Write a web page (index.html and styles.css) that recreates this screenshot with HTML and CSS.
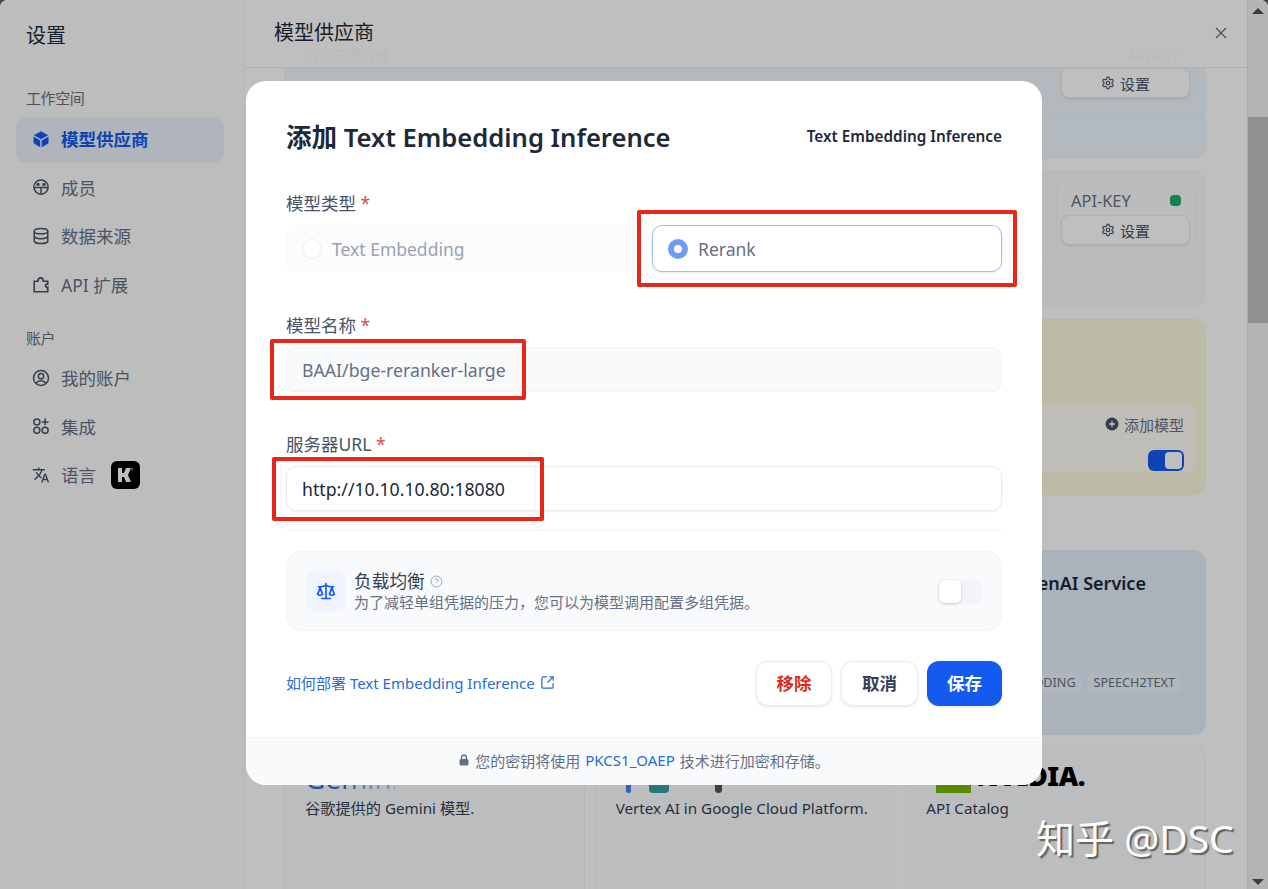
FILE: index.html
```html
<!DOCTYPE html>
<html lang="zh-CN">
<head>
  <meta charset="UTF-8" />
  <meta name="viewport" content="width=device-width, initial-scale=1.0"/>
  <title>设置 - 模型供应商</title>
  <link rel="stylesheet" href="styles.css">
</head>
<body>
  <svg class="defs" width="0" height="0">
    <symbol id="gear" viewBox="0 0 24 24">
      <path d="M12.22 2h-.44a2 2 0 0 0-2 2v.18a2 2 0 0 1-1 1.73l-.43.25a2 2 0 0 1-2 0l-.15-.08a2 2 0 0 0-2.73.73l-.22.38a2 2 0 0 0 .73 2.73l.15.1a2 2 0 0 1 1 1.72v.51a2 2 0 0 1-1 1.74l-.15.09a2 2 0 0 0-.73 2.73l.22.38a2 2 0 0 0 2.73.73l.15-.08a2 2 0 0 1 2 0l.43.25a2 2 0 0 1 1 1.73V20a2 2 0 0 0 2 2h.44a2 2 0 0 0 2-2v-.18a2 2 0 0 1 1-1.73l.43-.25a2 2 0 0 1 2 0l.15.08a2 2 0 0 0 2.73-.73l.22-.39a2 2 0 0 0-.73-2.73l-.15-.08a2 2 0 0 1-1-1.74v-.5a2 2 0 0 1 1-1.74l.15-.09a2 2 0 0 0 .73-2.73l-.22-.38a2 2 0 0 0-2.73-.73l-.15.08a2 2 0 0 1-2 0l-.43-.25a2 2 0 0 1-1-1.73V4a2 2 0 0 0-2-2z" fill="none" stroke="currentColor" stroke-width="2"/>
      <circle cx="12" cy="12" r="3" fill="none" stroke="currentColor" stroke-width="2"/>
    </symbol>
  </svg>

  <div class="app">
    <aside class="sidebar">
      <h1 class="sidebar-title">设置</h1>
      <div class="nav-group">工作空间</div>
      <a class="nav-item active">
        <svg class="nav-icon" viewBox="0 0 24 24"><path d="M12 1.5 21.5 7 12 12.4 2.5 7z" fill="currentColor"/><path d="M2 8.8l9 5.2v9L3 18.4a2 2 0 0 1-1-1.7zM22 8.8 13 14v9l8-4.600a2 2 0 0 0 1-1.700z" fill="currentColor"/></svg>
        模型供应商
      </a>
      <a class="nav-item">
        <svg class="nav-icon" viewBox="0 0 24 24" fill="none" stroke="currentColor" stroke-width="2"><circle cx="12" cy="12" r="9.500"/><path d="M2.500 12.500h19M12 12.500V21"/><circle cx="8" cy="8.500" r="1.300"/><circle cx="16" cy="8.500" r="1.300"/></svg>
        成员
      </a>
      <a class="nav-item">
        <svg class="nav-icon" viewBox="0 0 24 24" fill="none" stroke="currentColor" stroke-width="2"><ellipse cx="12" cy="5.500" rx="9" ry="3.500"/><path d="M3 5.500v13c0 1.900 4 3.500 9 3.500s9-1.600 9-3.500v-13M3 12c0 1.900 4 3.500 9 3.500s9-1.600 9-3.500"/></svg>
        数据来源
      </a>
      <a class="nav-item">
        <svg class="nav-icon" viewBox="0 0 24 24" fill="none" stroke="currentColor" stroke-width="2.200"><path d="M3 21V7h5c0-6 7-6 7 0h6v4c-4-1-4 5 0 4v6z"/></svg>
        API 扩展
      </a>
      <div class="nav-group second">账户</div>
      <a class="nav-item">
        <svg class="nav-icon" viewBox="0 0 24 24" fill="none" stroke="currentColor" stroke-width="2"><circle cx="12" cy="12" r="10"/><circle cx="12" cy="9.500" r="3.500"/><path d="M5.500 19c3-4.500 10-4.500 13 0"/></svg>
        我的账户
      </a>
      <a class="nav-item">
        <svg class="nav-icon" viewBox="0 0 24 24" fill="none" stroke="currentColor" stroke-width="2"><circle cx="6.500" cy="6.500" r="4"/><circle cx="6.500" cy="17.500" r="4"/><circle cx="17.500" cy="17.500" r="4"/><path d="M17.500 2v9M13 6.500h9"/></svg>
        集成
      </a>
      <a class="nav-item">
        <svg class="nav-icon" viewBox="0 0 24 24"><path fill="currentColor" d="M12.870 15.070l-2.540-2.510.03-.03c1.740-1.940 2.980-4.170 3.710-6.530H17V4h-7V2H8v2H1v1.990h11.170C11.500 7.920 10.440 9.750 9 11.350 8.070 10.320 7.300 9.190 6.690 8h-2c.73 1.630 1.730 3.170 2.980 4.560l-5.090 5.020L4 19l5-5 3.110 3.110.76-2.040zM18.500 10h-2L12 22h2l1.120-3h4.750L21 22h2l-4.500-12zm-2.620 7l1.620-4.330L19.120 17h-3.240z"/></svg>
        语言
        <span class="k-badge">
          <svg viewBox="0 0 28 28" width="28" height="28"><path d="M7 7h4v5h2l2-5h5l-3 7 3 7h-5l-2-5h-2v5H7z" fill="#fff"/><circle cx="21" cy="8" r="1.500" fill="#4a5fd0"/></svg>
        </span>
      </a>
    </aside>

    <main class="main">
      <header class="main-header">
        <span class="main-title">模型供应商</span>
        <span class="ghost-left">当前配置列表</span>
        <span class="ghost-right">API-KEY</span>
        <svg class="close-icon" viewBox="0 0 14 14" fill="none" stroke="currentColor" stroke-width="1.300"><path d="M2 2l10 10M12 2 2 12"/></svg>
      </header>

      <div class="content">
        <section class="card card-blue card-first">
          <div class="key-box key-box-top">
            <button class="btn-setting"><svg class="gear"><use href="#gear"/></svg>设置</button>
          </div>
          <div class="card-strip"></div>
        </section>

        <section class="card card-plain card-second">
          <div class="key-box">
            <div class="key-row"><span>API-KEY</span><i class="dot"></i></div>
            <button class="btn-setting"><svg class="gear"><use href="#gear"/></svg>设置</button>
          </div>
          <div class="card-strip"></div>
        </section>

        <section class="card card-yellow">
          <div class="model-panel">
            <div class="add-model">
              <svg viewBox="0 0 14 14" width="14" height="14"><circle cx="7" cy="7" r="6.500" fill="#475467"/><path d="M7 4v6M4 7h6" stroke="#fff" stroke-width="1.400"/></svg>
              添加模型
            </div>
            <div class="toggle-on"><i></i></div>
          </div>
        </section>

        <div class="provider-row first-row">
          <div class="provider"></div>
          <div class="provider"></div>
          <div class="provider provider-azure">
            <div class="provider-name">Azure OpenAI Service</div>
            <div class="tags">
              <span class="tag">EMBEDDING</span>
              <span class="tag">SPEECH2TEXT</span>
            </div>
          </div>
        </div>

        <div class="provider-row">
          <div class="provider">
            <div class="logo-gemini">Gemini</div>
            <p class="provider-desc">谷歌提供的 Gemini 模型.</p>
          </div>
          <div class="provider">
            <div class="logo-vertex"><i class="vertex-dot"></i><i class="vertex-block"></i><i class="vertex-tail"></i></div>
            <p class="provider-desc">Vertex AI in Google Cloud Platform.</p>
          </div>
          <div class="provider">
            <div class="logo-nvidia"><i></i><span>NVIDIA.</span></div>
            <p class="provider-desc">API Catalog</p>
          </div>
        </div>
      </div>
    </main>

    <div class="scrollbar">
      <span class="arrow-up"></span>
      <div class="scroll-track"><div class="scroll-thumb"></div></div>
      <span class="arrow-down"></span>
    </div>

    <div class="overlay"></div>

    <div class="modal">
      <div class="modal-body">
        <div class="modal-head">
          <h2>添加 Text Embedding Inference</h2>
          <span class="modal-brand">Text Embedding Inference</span>
        </div>

        <label class="field-label first">模型类型 <em>*</em></label>
        <div class="radio-row">
          <div class="radio-option">
            <i class="radio"></i>Text Embedding
          </div>
          <div class="radio-option selected">
            <i class="radio"></i>Rerank
          </div>
        </div>

        <label class="field-label name-label">模型名称 <em>*</em></label>
        <div class="text-input filled">BAAI/bge-reranker-large</div>

        <label class="field-label url-label">服务器URL <em>*</em></label>
        <div class="text-input active">http://10.10.10.80:18080</div>

        <div class="divider"></div>

        <div class="balance-card">
          <div class="balance-icon">
            <svg viewBox="0 0 24 24" width="20" height="20" fill="none" stroke="currentColor" stroke-width="2" stroke-linecap="round" stroke-linejoin="round"><path d="m16 16 3-8 3 8c-.87.65-1.920 1-3 1s-2.130-.35-3-1Z"/><path d="m2 16 3-8 3 8c-.87.65-1.920 1-3 1s-2.130-.35-3-1Z"/><path d="M7 21h10"/><path d="M12 3v18"/><path d="M3 7h2c2 0 5-1 7-2 2 1 5 2 7 2h2"/></svg>
          </div>
          <div class="balance-text">
            <div class="balance-title">负载均衡
              <svg viewBox="0 0 24 24" width="13" height="13" fill="none" stroke="#98a2b3" stroke-width="1.800"><circle cx="12" cy="12" r="10"/><path d="M9.100 9a3 3 0 0 1 5.800 1c0 2-3 2.500-3 4"/><path d="M12 17.500v.5"/></svg>
            </div>
            <div class="balance-sub">为了减轻单组凭据的压力，您可以为模型调用配置多组凭据。</div>
          </div>
          <div class="toggle-off"><i></i></div>
        </div>

        <div class="modal-actions">
          <a class="doc-link">如何部署 Text Embedding Inference
            <svg viewBox="0 0 24 24" width="15" height="15" fill="none" stroke="currentColor" stroke-width="2"><path d="M21 13v6a2 2 0 0 1-2 2H5a2 2 0 0 1-2-2V5a2 2 0 0 1 2-2h6"/><path d="m21 3-9 9"/><path d="M15 3h6v6"/></svg>
          </a>
          <div class="action-btns">
            <button class="btn btn-remove">移除</button>
            <button class="btn btn-cancel">取消</button>
            <button class="btn btn-save">保存</button>
          </div>
        </div>
      </div>

      <div class="modal-foot">
        <svg viewBox="0 0 12 12" width="12" height="12"><path d="M3.500 5V3.500a2.500 2.500 0 0 1 5 0V5" fill="none" stroke="#667085" stroke-width="1.300"/><rect x="1.500" y="5" width="9" height="6.500" rx="1.500" fill="#667085"/></svg>
        您的密钥将使用 <a>PKCS1_OAEP</a> 技术进行加密和存储。
      </div>
    </div>

    <!-- annotations drawn on the screenshot -->
    <div class="mark mark-radio"></div>
    <div class="mark mark-name"></div>
    <div class="mark mark-url"></div>
    <div class="watermark">知乎 @DSC</div>
  </div>
</body>
</html>
```

FILE: styles.css
```css
* {
  box-sizing: border-box;
  font-family: "Noto Sans", "Noto Sans CJK SC", sans-serif;
}

html, body {
  margin: 0;
  height: 100%;
  overflow: hidden;
  background-color: #4a4a4a;
}

.defs {
  position: absolute;
}

button {
  border: none;
  background: none;
  padding: 0;
}

.app {
  position: relative;
  display: flex;
  height: 889px;
  overflow: hidden;
  background-color: #ffffff;
  border-radius: 8px 8px 0 0;
}

/* sidebar */
.sidebar {
  flex: 0 0 245px;
  padding: 0 20px 0 16px;
  background-color: #fcfcfd;
  border-right: 1px solid #f2f4f7;
}

.sidebar-title {
  margin: 20px 0 0 10px;
  height: 32px;
  font-size: 20px;
  line-height: 32px;
  font-weight: 400;
  color: #1d2939;
}

.nav-group {
  margin: 36px 0 8.500px 10px;
  height: 20px;
  font-size: 15px;
  line-height: 20px;
  color: #667085;
  letter-spacing: -0.4px;
}

.nav-group.second {
  margin: 19px 0 0 10px;
}

.nav-item {
  display: flex;
  align-items: center;
  gap: 11px;
  height: 46px;
  margin-bottom: 2.700px;
  padding: 0 0 2px 16px;
  border-radius: 10px;
  font-size: 17.500px;
  color: #667085;
}

.nav-item.active {
  background-color: #ebf0fa;
  color: #155aef;
  font-weight: 700;
}

.nav-group.second + .nav-item {
  margin-top: 8px;
}

.nav-icon {
  width: 18px;
  height: 18px;
  flex: none;
  color: #475467;
}

.active .nav-icon {
  color: #155aef;
}

.k-badge {
  width: 29px;
  height: 28px;
  margin-left: 4px;
  background-color: #000000;
  border-radius: 6px;
}

/* main column */
.main {
  flex: 1;
  min-width: 0;
  overflow: hidden;
}

.main-header {
  position: relative;
  height: 68px;
  padding: 20px 0 0 29px;
  background-color: #ffffff;
  border-bottom: 1px solid #eaecf0;
}

.main-title {
  display: block;
  font-size: 20px;
  line-height: 26px;
  color: #1d2939;
}

.ghost-left,
.ghost-right {
  position: absolute;
  top: 46px;
  font-size: 14px;
  line-height: 20px;
  color: #98a2b3;
  opacity: 0.08;
}

.ghost-left { left: 60px; }
.ghost-right { right: 68px; }

.close-icon {
  position: absolute;
  top: 26px;
  right: 19px;
  width: 14px;
  height: 14px;
  color: #667085;
}

.content {
  display: flex;
  flex-direction: column;
  padding: 0 41px 0 39px;
}

.card {
  position: relative;
  border: 1px solid #f2f4f7;
  border-radius: 12px;
}

.card-strip {
  position: absolute;
  left: 0;
  right: 0;
  bottom: 0;
  height: 45px;
  border-top: 1px solid #f2f4f7;
}

.card-first {
  height: 91px;
  background-color: #eff8ff;
  border-radius: 0 0 12px 12px;
  border-top: none;
}

.card-first .card-strip {
  height: 42px;
  border-top-color: #e6f0f8;
}

.card-second {
  height: 136px;
  margin-top: 12px;
  background-color: #f9fafb;
}

.key-box {
  position: absolute;
  top: 9px;
  right: 9px;
  width: 140px;
  height: 70px;
  padding: 4px;
  background-color: #fbfbfc;
  border: 1px solid #f2f4f7;
  border-radius: 10px;
}

.key-box-top {
  top: 0;
  height: 36px;
  padding-top: 0;
  border-top: none;
  border-radius: 0 0 10px 10px;
  background-color: #eff6fb;
}

.key-row {
  display: flex;
  justify-content: space-between;
  align-items: center;
  height: 29px;
  padding: 0 10px;
  font-size: 16.400px;
  color: #667085;
}

.dot {
  width: 11px;
  height: 11px;
  background-color: #17b26a;
  border-radius: 4px;
}

.btn-setting {
  display: flex;
  align-items: center;
  justify-content: center;
  gap: 5px;
  width: 129px;
  height: 30px;
  font-size: 15px;
  color: #475467;
  background-color: #ffffff;
  border: 1px solid #eaecf0;
  border-radius: 8px;
  box-shadow: 0 1px 2px rgba(16, 24, 40, 0.12);
}

.gear {
  width: 14px;
  height: 14px;
}

.card-yellow {
  height: 176px;
  margin-top: 12px;
  background-color: #fef9e0;
  border-color: #fdf5d6;
}

.model-panel {
  position: absolute;
  top: 84px;
  left: 9px;
  right: 9px;
  height: 68px;
  padding: 9px 12px 0 0;
  background-color: rgba(255, 255, 255, 0.7);
  border-radius: 10px;
  text-align: right;
}

.add-model {
  display: flex;
  justify-content: flex-end;
  align-items: center;
  gap: 5px;
  height: 22px;
  font-size: 15px;
  color: #667085;
}

.toggle-on {
  display: flex;
  justify-content: flex-end;
  width: 36px;
  height: 21px;
  margin: 15px 0 0 auto;
  padding: 2px;
  background-color: #155aef;
  border-radius: 6px;
}

.toggle-on i {
  width: 17px;
  height: 17px;
  background-color: #ffffff;
  border-radius: 4px;
}

.provider-row {
  display: grid;
  grid-template-columns: repeat(3, 1fr);
  gap: 10px;
  margin-top: 10px;
}

.first-row {
  margin-top: 55px;
}

.provider {
  position: relative;
  height: 185px;
  padding: 16px 20px;
  background-color: #fbfcfe;
  border: 1px solid #f2f4f7;
  border-radius: 12px;
}

.provider-row:last-child .provider {
  height: 220px;
}

.provider-azure {
  background-color: #e3eefa;
  border-color: #e3eefa;
}

.provider-name {
  margin: 4px 0 0 31px;
  font-size: 18px;
  line-height: 24px;
  font-weight: 600;
  color: #1d2939;
}

.tags {
  position: absolute;
  top: 122px;
  right: 24px;
  display: flex;
  gap: 6px;
}

.tag {
  padding: 0 6px;
  height: 20px;
  font-size: 12.600px;
  line-height: 20px;
  white-space: nowrap;
  color: #667085;
  background-color: rgba(255, 255, 255, 0.3);
  border-radius: 5px;
}

.logo-gemini {
  height: 30px;
  margin-top: 1px;
  font-size: 28px;
  line-height: 30px;
  background-image: linear-gradient(90deg, #1b6fe0 40%, #a9b8ec 75%);
  background-size: 90px 100%;
  background-repeat: no-repeat;
  background-clip: text;
  -webkit-background-clip: text;
  color: transparent;
}

.logo-nvidia {
  display: flex;
  align-items: center;
  gap: 5px;
  height: 30px;
  margin: 1px 0 0 10px;
  padding-bottom: 6px;
  font-size: 27px;
  font-weight: 900;
  letter-spacing: -0.5px;
  color: #000000;
}

.logo-nvidia i {
  align-self: flex-end;
  width: 35px;
  height: 26px;
  margin-bottom: -6px;
  background-color: #76b900;
}

.logo-vertex {
  display: flex;
  align-items: flex-end;
  height: 30px;
  margin-top: 1px;
}

.vertex-dot {
  width: 5px;
  height: 14px;
  margin: 0 18px 0 10px;
  background-color: #4285f4;
  border-radius: 3px;
}

.vertex-block {
  width: 20px;
  height: 14px;
  background-color: #34a0a4;
  border-radius: 0 0 4px 4px;
}

.vertex-tail {
  width: 7px;
  height: 14px;
  margin-left: 46px;
  background-color: #555555;
  border-radius: 0 0 4px 4px;
}

.provider-desc {
  margin: 5px 0 0;
  font-size: 15.200px;
  line-height: 20px;
  white-space: nowrap;
  color: #344054;
}

/* native-looking scrollbar */
.scrollbar {
  display: flex;
  flex-direction: column;
  flex: 0 0 21px;
  background-color: #f1f1f1;
  border-left: 1px solid #e8e8e8;
}

.scroll-track {
  flex: 1;
  padding-top: 93px;
}

.scroll-thumb {
  height: 206px;
  background-color: #c1c1c1;
}

.arrow-up,
.arrow-down {
  align-self: center;
  width: 0;
  height: 0;
  border-left: 6px solid transparent;
  border-right: 6px solid transparent;
}

.arrow-up {
  height: 6px;
  margin: 8px 0 10px;
  border-bottom: 6px solid #505050;
}

.arrow-down {
  margin: 0 0 4px;
  border-top: 6px solid #505050;
}

/* modal */
.overlay {
  position: absolute;
  inset: 0;
  background-color: rgba(0, 0, 0, 0.25);
}

.modal {
  position: absolute;
  top: 81px;
  left: 246px;
  display: flex;
  flex-direction: column;
  width: 796px;
  height: 704px;
  background-color: #ffffff;
  border-radius: 20px;
  overflow: hidden;
}

.modal-body {
  flex: 1;
  padding: 0 40px;
}

.modal-head {
  display: flex;
  justify-content: space-between;
  align-items: center;
  height: 34px;
  margin-top: 38px;
}

.modal-head h2 {
  margin: 0;
  font-size: 25.600px;
  font-weight: 600;
  white-space: nowrap;
  color: #1d2939;
}

.modal-brand {
  font-size: 15.300px;
  font-weight: 600;
  white-space: nowrap;
  color: #1d2939;
}

.field-label {
  display: block;
  height: 20px;
  font-size: 17.500px;
  line-height: 20px;
  color: #475467;
}

.field-label em {
  font-style: normal;
  color: #e5484d;
}

.field-label.first { margin-top: 40px; }
.name-label { margin-top: 43px; }
.url-label { margin-top: 42px; }

.radio-row {
  display: grid;
  grid-template-columns: 1fr 1fr;
  gap: 16px;
  margin-top: 12px;
}

.radio-option {
  display: flex;
  align-items: center;
  gap: 10px;
  height: 47px;
  padding-left: 15px;
  font-size: 17.500px;
  color: #98a2b3;
  background-color: #fcfcfd;
  border: 1px solid #f9fafb;
  border-radius: 10px;
}

.radio-option.selected {
  color: #667085;
  background-color: #ffffff;
  border: 1px solid #a3bff0;
  box-shadow: 0 1px 3px rgba(16, 24, 40, 0.1);
}

.radio {
  width: 20px;
  height: 20px;
  background-color: #ffffff;
  border: 1px solid #eaecf0;
  border-radius: 50%;
}

.selected .radio {
  border: 6px solid #6f9cf2;
}

.text-input {
  display: flex;
  align-items: center;
  height: 45px;
  margin-top: 12px;
  padding-left: 15px;
  font-size: 17.700px;
  border-radius: 10px;
}

.text-input.filled {
  color: #667085;
  background-color: #f9fafb;
  border: 1px solid #f2f4f7;
}

.text-input.active {
  color: #1d2939;
  background-color: #ffffff;
  border: 1px solid #eaecf0;
  box-shadow: 0 1px 2px rgba(16, 24, 40, 0.06);
}

.divider {
  height: 1px;
  margin-top: 19px;
  background-color: #f2f4f7;
}

.balance-card {
  display: flex;
  align-items: center;
  height: 80px;
  margin-top: 20px;
  padding: 0 19px;
  background-color: #f9fafb;
  border: 1px solid #f2f4f7;
  border-radius: 16px;
}

.balance-icon {
  display: flex;
  align-items: center;
  justify-content: center;
  flex: none;
  width: 40px;
  height: 41px;
  margin-right: 8px;
  color: #155aef;
  background-color: #eff4ff;
  border-radius: 10px;
}

.balance-text {
  flex: 1;
}

.balance-title {
  display: flex;
  align-items: center;
  gap: 5px;
  font-size: 17.700px;
  line-height: 22px;
  color: #344054;
}

.balance-sub {
  font-size: 15px;
  line-height: 20px;
  color: #667085;
}

.toggle-off {
  width: 44px;
  height: 25px;
  padding: 1px;
  background-color: #f2f4f7;
  border-radius: 6px;
}

.toggle-off i {
  display: block;
  width: 22px;
  height: 23px;
  background-color: #ffffff;
  border-radius: 5px;
  box-shadow: 0 1px 3px rgba(16, 24, 40, 0.2);
}

.modal-actions {
  display: flex;
  justify-content: space-between;
  align-items: center;
  height: 45px;
  margin-top: 30px;
}

.doc-link {
  display: flex;
  align-items: center;
  gap: 5px;
  margin-top: -3px;
  font-size: 15px;
  color: #2b6bd6;
}

.action-btns {
  display: flex;
  gap: 9px;
}

.btn {
  width: 76px;
  height: 45px;
  padding-bottom: 2px;
  font-size: 17.500px;
  font-weight: 700;
  background-color: #ffffff;
  border: 1px solid #eaecf0;
  border-radius: 12px;
  box-shadow: 0 1px 3px rgba(16, 24, 40, 0.1);
}

.btn-remove { color: #d92d20; }

.btn-cancel {
  width: 77px;
  color: #344054;
}

.btn-save {
  width: 75px;
  color: #ffffff;
  background-color: #155aef;
  border: none;
}

.modal-foot {
  display: flex;
  align-items: center;
  justify-content: center;
  gap: 5px;
  height: 48px;
  padding-bottom: 3px;
  font-size: 15px;
  color: #667085;
  background-color: #f9fafb;
  border-top: 1px solid #f2f4f7;
}

.modal-foot a {
  color: #2b6bd6;
}

/* red boxes and watermark sit on top of everything */
.mark {
  position: absolute;
  border: 4px solid #e8261c;
  border-radius: 2px;
}

.mark-radio { left: 637px; top: 210px; width: 380px; height: 77px; }
.mark-name { left: 270px; top: 339px; width: 256px; height: 61px; }
.mark-url { left: 272px; top: 457px; width: 272px; height: 64px; }

.watermark {
  position: absolute;
  left: 1036px;
  top: 813px;
  font-size: 39px;
  line-height: 50px;
  white-space: nowrap;
  color: #ffffff;
  text-shadow: 2px 2px 1px rgba(60, 60, 60, 0.7);
}
```
